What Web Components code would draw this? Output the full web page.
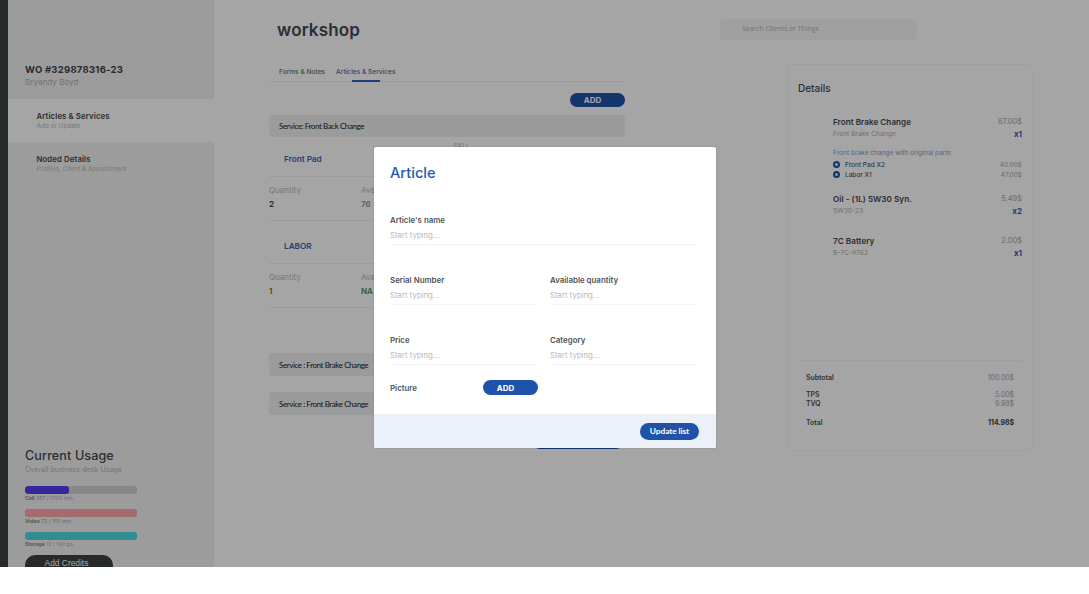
<!DOCTYPE html>
<html lang="en"><head><meta charset="utf-8"><title>workshop</title>
<style>
html,body{margin:0;padding:0;background:#fff}
body{font-family:Inter,"Liberation Sans",sans-serif;color:#2b2f33}
</style></head><body>
<app-shell>
  <side-nav slot="side"></side-nav>
  <work-area slot="main"></work-area>
  <details-card slot="details"></details-card>
  <article-modal slot="modal"></article-modal>
</app-shell>
<script>
function def(name,html){
  customElements.define(name,class extends HTMLElement{
    connectedCallback(){
      if(this.shadowRoot)return;
      const a=n=>this.getAttribute(n)||'';
      const r=this.attachShadow({mode:'open'});
      r.innerHTML=typeof html==='function'?html(a):html;
    }
  });
}
const F='Inter,"Liberation Sans",sans-serif';
def('pill-button',a=>`<style>
:host{display:inline-flex;align-items:center;justify-content:center;height:var(--h,14px);width:var(--w,55px);padding-right:var(--pr,10px);border-radius:9px;background:#1f52a8;color:#fff;font:700 8px/1 ${F};box-sizing:border-box}
</style><slot></slot>`);

def('nav-item',a=>`<style>
:host{display:block;flex:none;height:43px;box-sizing:border-box;padding:10.5px 0 0 28.5px;background:var(--bg,transparent)}
.t{font:600 7.8px/12px ${F};color:#45484c;letter-spacing:.1px;height:12px}
.s{font:400 6.5px/9px ${F};color:#bdbdbd;height:9px;letter-spacing:-.05px}
</style><div class="t">${a('title')}</div><div class="s">${a('sub')}</div>`);

def('usage-bar',a=>`<style>
:host{display:block;height:23px}
.b{height:8px;border-radius:3px;background:${a('track')};overflow:hidden}
.f{height:100%;width:${a('fill')};background:${a('color')};border-radius:3px}
.c{font:400 5.2px/7px ${F};color:#a8a8a8;height:7px;margin-top:1px;white-space:nowrap}
b{font-weight:700;color:#8a8a8a}
</style><div class="b"><div class="f"></div></div><div class="c"><b>${a('name')}</b> ${a('value')}</div>`);

def('side-nav',`<style>
:host{display:flex;flex-direction:column;flex:none;width:206px;height:567px;background:#f2f2f2;box-sizing:border-box;overflow:hidden}
.head{flex:none;height:99px;box-sizing:border-box;padding-top:63px;padding-left:17px}
.wo{font:700 9.5px/13px ${F};color:#404448;letter-spacing:.25px}
.who{font:400 8.1px/12px ${F};color:#b4b4b4}
nav-item:first-of-type{--bg:#fff}
.usage{flex:none;margin-top:263px;padding-left:17px}
h3{margin:0;font:500 12.6px/16px ${F};color:#44484e;letter-spacing:.1px}
.u{font:400 7.1px/10px ${F};color:#b4b4b4;margin:1px 0 11px}
.bars{width:112px}
.credits{width:83px;padding-right:5px;height:24px;border-radius:10px;background:#3c4242;color:#fff;font:400 8.4px/16px "Liberation Sans",sans-serif;text-align:center}
</style>
<div class="head"><div class="wo">WO #329878316-23</div><div class="who">Bryandy Boyd</div></div>
<nav-item title="Articles &amp; Services" sub="Add or Update"></nav-item>
<nav-item title="Noded Details" sub="Profiles, Client &amp; Appointment"></nav-item>
<div class="usage">
  <h3>Current Usage</h3>
  <div class="u">Overall business desk Usage</div>
  <div class="bars">
  <usage-bar name="Call" value="387 / 1000 min." track="#d2d2d2" color="#533bee" fill="39%"></usage-bar>
  <usage-bar name="Video" value="72 / 100 min." track="#ffa4aa" color="#ffa4aa" fill="100%"></usage-bar>
  <usage-bar name="Storage" value="12 / 100 go." track="#4fd8df" color="#4fd8df" fill="100%"></usage-bar>
  </div>
  <div class="credits">Add Credits</div>
</div>`);

def('service-bar',a=>`<style>
:host{display:flex;align-items:center;height:var(--h,23px);border-radius:4px;background:#f0f0f0;padding-left:10px;font:400 8px/1 Lato,sans-serif;color:#1c1c22;letter-spacing:-.42px}
</style>${a('label')}`);

def('part-row',a=>`<style>
:host{display:block;width:356px;margin-top:var(--mt,0)}
.name{height:33px;padding-top:6px;display:flex;align-items:center;padding-left:15px;font:600 8.2px/1 ${F};color:#4060b8;border-bottom:1px solid #f0f0f0;position:relative}
.cols{display:grid;grid-template-columns:92px 92px 92px 1fr;height:43px;border-bottom:1px solid #f0f0f0}
.l{font:400 8px/10px ${F};color:#b8b8b8;margin-top:8px}
.v{font:700 8px/10px ${F};margin-top:4px;color:var(--v,#45484c)}
.n{font:700 8px/10px ${F};margin-top:4px;color:var(--av,#9a9a9a)}
.sku{position:absolute;left:184px;top:6px;font:400 7px/8px ${F};color:#b8b8b8}
</style><div class="name">${a('name')}<span class="sku">${a('sku')}</span></div>
<div class="cols"><div><div class="l">Quantity</div><div class="v">${a('qty')}</div></div><div><div class="l">Available</div><div class="n">${a('avail')}</div></div></div>`);

def('work-area',`<style>
:host{display:block;width:356px}
h1{margin:0;height:58px;padding:19px 0 0 8px;box-sizing:border-box;font:600 17px/22px ${F};color:#44485a;letter-spacing:.15px}
.tabs{display:flex;height:23px;border-bottom:1px solid #f0f0f0;padding-left:10px;gap:11px;font:500 6.6px/29px ${F};color:#6c6f74}
.tabs .on{color:#5a68a8;position:relative}
.tabs .on::after{content:"";position:absolute;left:16px;right:16px;bottom:-1px;height:2px;background:#2a62c0}
.add{display:flex;justify-content:flex-end;margin:11px 0 8px}
.sp{height:45px}
.gap{height:16px}
.bottom{display:block;margin:20px 0 0 264px;--w:90px}
</style>
<h1>workshop</h1>
<div class="tabs"><span>Forms &amp; Notes</span><span class="on">Articles &amp; Services</span></div>
<div class="add"><pill-button>ADD</pill-button></div>
<service-bar label="Service: Front Back Change" style="--h:22px"></service-bar>
<part-row name="Front Pad" sku="SKU" qty="2" avail="76"></part-row>
<part-row name="LABOR" qty="1" avail="NA" style="--mt:3px;--v:#9a6a30;--av:#5a9a70"></part-row>
<div class="sp"></div>
<service-bar label="Service : Front Brake Change"></service-bar>
<div class="gap"></div>
<service-bar label="Service : Front Brake Change"></service-bar>
<pill-button class="bottom"></pill-button>`);

def('line-item',a=>`<style>
:host{display:flex;justify-content:space-between;padding-left:35px}
.n{font:600 8.1px/12px ${F};color:#454850;letter-spacing:.05px}
.s{font:400 6.7px/12px ${F};color:#b0b0b0}
.p{font:400 7.5px/12px ${F};color:#a4a4a4;text-align:right}
.q{font:700 8px/12px ${F};color:#3a5ab8;text-align:right}
</style><div><div class="n">${a('name')}</div><div class="s">${a('sub')}</div></div><div><div class="p">${a('price')}</div><div class="q">${a('qty')}</div></div>`);

def('sum-row',a=>`<style>
:host{display:flex;justify-content:space-between;height:9px;font:600 6.9px/9px ${F};color:#4a4d50;margin-top:var(--mt,0)}
.v{font-weight:var(--vw,400);color:var(--vc,#a4a4a4)}
</style><span>${a('k')}</span><span class="v">${a('v')}</span>`);

def('details-card',`<style>
:host{display:block;width:246px;height:387px;box-sizing:border-box;border:1px solid #f6f6f6;border-radius:6px;padding:16.5px 10px 0}
h2{margin:0;font:500 10px/13px ${F};color:#44484e;height:13px}
.items{margin-top:21px}
.desc{font:400 6.6px/10px ${F};color:#8a9cc4;margin-top:8px;height:12px}
.opt{display:flex;align-items:center;height:10px;font:500 6.5px/10px ${F};color:#55585e}
.opt i{width:7px;height:7px;border-radius:50%;border:2.6px solid #1f52a8;box-sizing:border-box;background:#dfe6f2;margin-right:5px;display:block;flex:none}
.opt em{margin-left:auto;font:normal 400 6.5px/10px ${F};color:#a4a4a4}
.rule{height:1px;background:#f4f4f4}
.sum{padding:12px 8px 0}
.opts{margin-left:35px}
</style>
<h2>Details</h2>
<div class="items">
  <line-item name="Front Brake Change" sub="Front Brake Change" price="87.00$" qty="x1"></line-item>
  <div class="opts">
    <div class="desc">Front brake change with original parts</div>
    <div class="opt"><i></i>Front Pad X2<em>40.00$</em></div>
    <div class="opt"><i></i>Labor X1<em>47.00$</em></div>
  </div>
  <div style="height:13px"></div>
  <line-item name="Oil - (1L) 5W30 Syn." sub="5W30-23" price="5.49$" qty="x2"></line-item>
  <div style="height:18px"></div>
  <line-item name="7C Battery" sub="B-7C-9762" price="2.00$" qty="x1"></line-item>
</div>
<div style="height:101px"></div>
<div class="rule"></div>
<div class="sum">
  <sum-row k="Subtotal" v="100.00$"></sum-row>
  <sum-row k="TPS" v="5.00$" style="--mt:8px"></sum-row>
  <sum-row k="TVQ" v="9.98$"></sum-row>
  <sum-row k="Total" v="114.98$" style="--mt:10px;--vw:700;--vc:#3c3f44"></sum-row>
</div>`);

def('search-box',`<style>
:host{display:flex;align-items:center;width:197px;height:21px;border-radius:4px;background:#f7f7f7;padding-left:22px;box-sizing:border-box;font:400 6.9px/1 "Open Sans",sans-serif;color:#b4b4b4}
</style>Search Clients or Things`);

def('form-field',a=>`<style>
:host{display:block;height:60px;box-sizing:border-box}
.l{font:600 7.9px/12px ${F};color:#505357;height:12px}
.p{font:400 7.9px/12px ${F};color:#bbbbbb;margin-top:2.5px;height:12px;letter-spacing:-.05px}
.u{border-bottom:1px solid #f4f4f4;height:3px}
</style><div class="l">${a('label')}</div><div class="p">Start typing...</div><div class="u"></div>`);

def('article-modal',`<style>
:host{display:flex;flex-direction:column;width:342px;height:301px;background:#fff;border-radius:2px;overflow:hidden}
.body{flex:1;padding:16px 18px 0 16px}
h2{margin:0;font:500 14.6px/20px ${F};color:#2359ad;height:51px}
.two{display:grid;grid-template-columns:148px 148px;column-gap:12px}
.pic{display:grid;grid-template-columns:93px 55px;align-items:center;height:15px;margin-top:-14px;font:600 7.9px/12px ${F};color:#505357}
.foot{height:34px;background:#ecf0f8;display:flex;align-items:center;justify-content:flex-end;padding-right:17px}
.up{--w:59px;--h:17px;--pr:0px;font:700 8.4px/1 Lato,sans-serif;letter-spacing:-.1px}
</style>
<div class="body">
<h2>Article</h2>
<form-field label="Article's name"></form-field>
<div class="two"><form-field label="Serial Number"></form-field><form-field label="Available quantity"></form-field></div>
<div class="two"><form-field label="Price"></form-field><form-field label="Category"></form-field></div>
<div class="pic"><span>Picture</span><pill-button style="--h:15px">ADD</pill-button></div>
</div>
<div class="foot"><pill-button class="up">Update list</pill-button></div>`);

def('app-shell',`<style>
:host{display:block;position:relative;width:1089px;height:567px;overflow:hidden;background:#fff}
.rail{width:8px;background:#3c4242;flex:none}
.row{display:flex;height:567px}
.mid{flex:none;margin-left:55px;width:356px}
.right{flex:none;margin-left:95px;width:313px}
.top{height:19px}
.card{margin:24px 0 0 67px}
.dim{position:absolute;inset:0;background:rgba(0,0,0,.353);display:block}
.m{position:absolute;left:374px;top:147px;box-shadow:0 0 1px rgba(0,0,0,.3)}
</style>
<div class="row">
  <div class="rail"></div>
  <slot name="side"></slot>
  <div class="mid"><slot name="main"></slot></div>
  <div class="right"><div class="top"></div><search-box></search-box><div class="card"><slot name="details"></slot></div></div>
</div>
<div class="dim"></div>
<div class="m"><slot name="modal"></slot></div>`);
</script>
</body></html>
